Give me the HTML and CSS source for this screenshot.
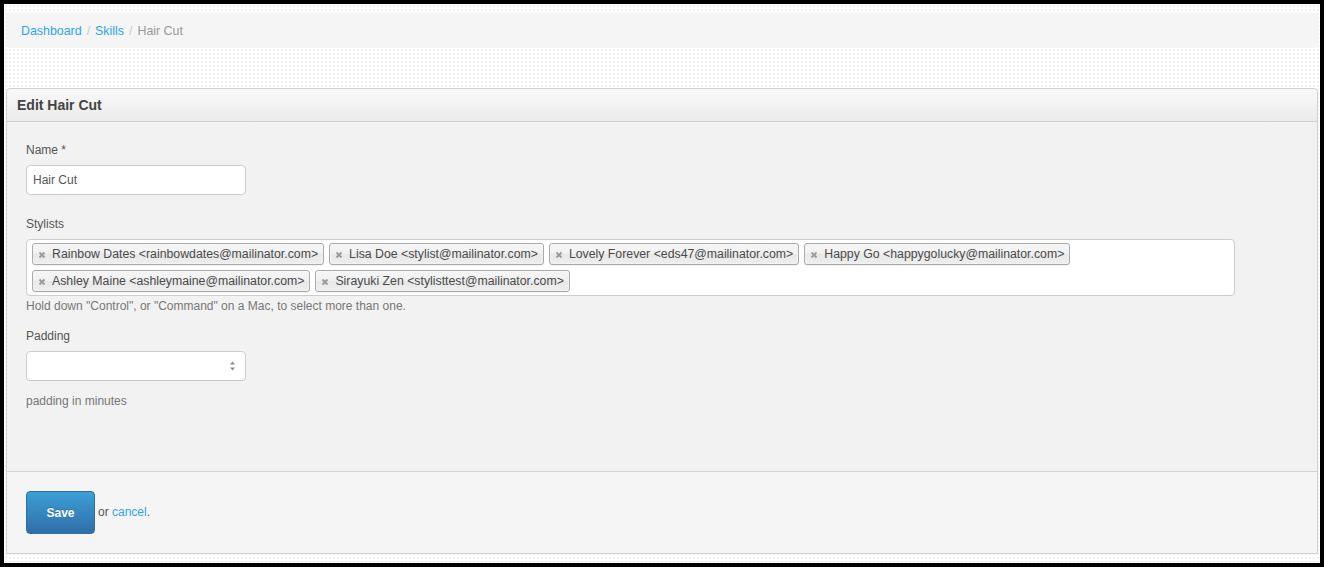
FILE: index.html
```html
<!DOCTYPE html>
<html lang="en">
<head>
  <meta charset="UTF-8">
  <title>Edit Hair Cut</title>
  <link rel="stylesheet" href="styles.css">
</head>
<body>
  <div class="frame">
    <ul class="breadcrumb">
      <li><a href="#">Dashboard</a><span class="divider">/</span></li>
      <li><a href="#">Skills</a><span class="divider">/</span></li>
      <li class="active">Hair Cut</li>
    </ul>

    <form class="panel">
      <div class="panel-heading">Edit Hair Cut</div>

      <div class="panel-body">
        <div class="field">
          <label class="field-label">Name *</label>
          <input class="text-input" type="text" value="Hair Cut">
        </div>

        <div class="field">
          <label class="field-label">Stylists</label>
          <ul class="chosen-choices">
            <li class="choice"><span class="choice-close"><svg viewBox="0 0 8 8"><path d="M1.5 1.5l5 5M6.5 1.5l-5 5"/></svg></span>Rainbow Dates &lt;rainbowdates@mailinator.com&gt;</li>
            <li class="choice"><span class="choice-close"><svg viewBox="0 0 8 8"><path d="M1.5 1.5l5 5M6.5 1.5l-5 5"/></svg></span>Lisa Doe &lt;stylist@mailinator.com&gt;</li>
            <li class="choice"><span class="choice-close"><svg viewBox="0 0 8 8"><path d="M1.5 1.5l5 5M6.5 1.5l-5 5"/></svg></span>Lovely Forever &lt;eds47@mailinator.com&gt;</li>
            <li class="choice"><span class="choice-close"><svg viewBox="0 0 8 8"><path d="M1.5 1.5l5 5M6.5 1.5l-5 5"/></svg></span>Happy Go &lt;happygolucky@mailinator.com&gt;</li>
            <li class="choice"><span class="choice-close"><svg viewBox="0 0 8 8"><path d="M1.5 1.5l5 5M6.5 1.5l-5 5"/></svg></span>Ashley Maine &lt;ashleymaine@mailinator.com&gt;</li>
            <li class="choice"><span class="choice-close"><svg viewBox="0 0 8 8"><path d="M1.5 1.5l5 5M6.5 1.5l-5 5"/></svg></span>Sirayuki Zen &lt;stylisttest@mailinator.com&gt;</li>
          </ul>
          <p class="help-text">Hold down "Control", or "Command" on a Mac, to select more than one.</p>
        </div>

        <div class="field">
          <label class="field-label">Padding</label>
          <div class="number-wrap">
            <input class="text-input" type="text" value="">
            <span class="spinner">
              <svg viewBox="0 0 7 12"><path d="M3.5 1.5L6 4.5H1z"/><path d="M3.5 10.5L6 7.5H1z"/></svg>
            </span>
          </div>
          <p class="help-text help-block">padding in minutes</p>
        </div>
      </div>

      <div class="panel-footer">
        <button class="btn-save" type="submit">Save</button>
        <span class="or-cancel">or <a href="#">cancel</a>.</span>
      </div>
    </form>
  </div>
</body>
</html>
```

FILE: styles.css
```css
/* Base */
* {
  box-sizing: border-box;
}
html, body {
  margin: 0;
  padding: 0;
  background: #000;
}
body {
  font-family: "Liberation Sans", Arial, sans-serif;
  font-size: 12px;
  color: #555;
}
a {
  color: #2fa4e7;
  text-decoration: none;
}

/* Dotted page area inside the dark window edge */
.frame {
  margin: 4px;
  height: 559px;
  padding: 9px 2px 0 2px;
  background-color: #fff;
  background-image: radial-gradient(circle, #ececec 0.6px, transparent 1.1px);
  background-size: 4px 4px;
  overflow: hidden;
}

/* Breadcrumb */
.breadcrumb {
  list-style: none;
  margin: 0 0 40px 0;
  padding: 0 15px;
  height: 35px;
  display: flex;
  align-items: center;
  background: #f5f5f5;
  border-radius: 4px;
  font-size: 12.4px;
}
.breadcrumb .divider {
  color: #ccc;
  padding: 0 5px;
}
.breadcrumb .active {
  color: #999;
}

/* Panel */
.panel {
  margin: 0;
  border: 1px solid #d2d2d2;
  border-radius: 4px 4px 0 0;
  background: #f2f2f2;
}
.panel-heading {
  height: 33px;
  padding: 0 10px;
  display: flex;
  align-items: center;
  font-size: 14px;
  font-weight: bold;
  color: #444;
  background: linear-gradient(to bottom, #f9f9f9, #ebebeb);
  border-bottom: 1px solid #cfcfcf;
  border-radius: 4px 4px 0 0;
}
.panel-body {
  height: 349px;
  padding: 18px 19px 0 19px;
}
.panel-footer {
  height: 82px;
  padding: 19px 19px 0 19px;
  background: #f5f5f5;
  border-top: 1px solid #d2d2d2;
  display: flex;
  align-items: flex-start;
}

/* Form fields */
.field-label {
  display: block;
  line-height: 18px;
  padding-top: 1px;
  margin-bottom: 6px;
  color: #555;
}
.text-input {
  display: block;
  width: 220px;
  height: 30px;
  padding: 4px 6px;
  margin: 0 0 19px 0;
  border: 1px solid #ccc;
  border-radius: 4px;
  background: #fff;
  font: inherit;
  color: #555;
}
.number-wrap {
  position: relative;
  width: 220px;
}
.number-wrap .text-input {
  margin-bottom: 0;
}
.spinner {
  position: absolute;
  right: 10px;
  top: 9px;
  width: 7px;
  height: 12px;
}
.spinner svg {
  display: block;
  width: 7px;
  height: 12px;
  fill: #888;
}

/* Multi select choices */
.chosen-choices {
  list-style: none;
  margin: 0;
  padding: 3px 0 3px 5px;
  width: 1209px;
  min-height: 57px;
  display: flex;
  flex-wrap: wrap;
  align-content: flex-start;
  gap: 5px 5px;
  background: #fff;
  border: 1px solid #ccc;
  border-radius: 4px;
}
.choice {
  display: flex;
  align-items: center;
  height: 22px;
  padding: 0 5px 0 19px;
  position: relative;
  font-size: 12.3px;
  color: #4a4a4a;
  border: 1px solid #aaa;
  border-radius: 3px;
  background: linear-gradient(to bottom, #f4f4f4 20%, #f0f0f0 50%, #e8e8e8 52%, #eeeeee 100%);
  box-shadow: 0 0 2px #fff inset, 0 1px 0 rgba(0, 0, 0, 0.05);
}
.choice-close {
  position: absolute;
  left: 5px;
  top: 7px;
  width: 8px;
  height: 8px;
}
.choice-close svg {
  display: block;
  width: 8px;
  height: 8px;
  stroke: #999;
  stroke-width: 1.8;
}
.help-text {
  margin: 0 0 11px 0;
  padding-top: 1px;
  line-height: 18px;
  color: #777;
}
.help-block {
  margin-top: 10px;
}

/* Footer actions */
.btn-save {
  width: 69px;
  height: 43px;
  border: 1px solid #2d6ea6;
  border-radius: 4px;
  background: linear-gradient(to bottom, #3d9fd7, #2f6ea8);
  color: #fff;
  font: bold 12px "Liberation Sans", Arial, sans-serif;
  text-shadow: 0 -1px 0 rgba(0, 0, 0, 0.2);
  cursor: pointer;
}
.or-cancel {
  margin-left: 3px;
  line-height: 43px;
  color: #555;
}
```
